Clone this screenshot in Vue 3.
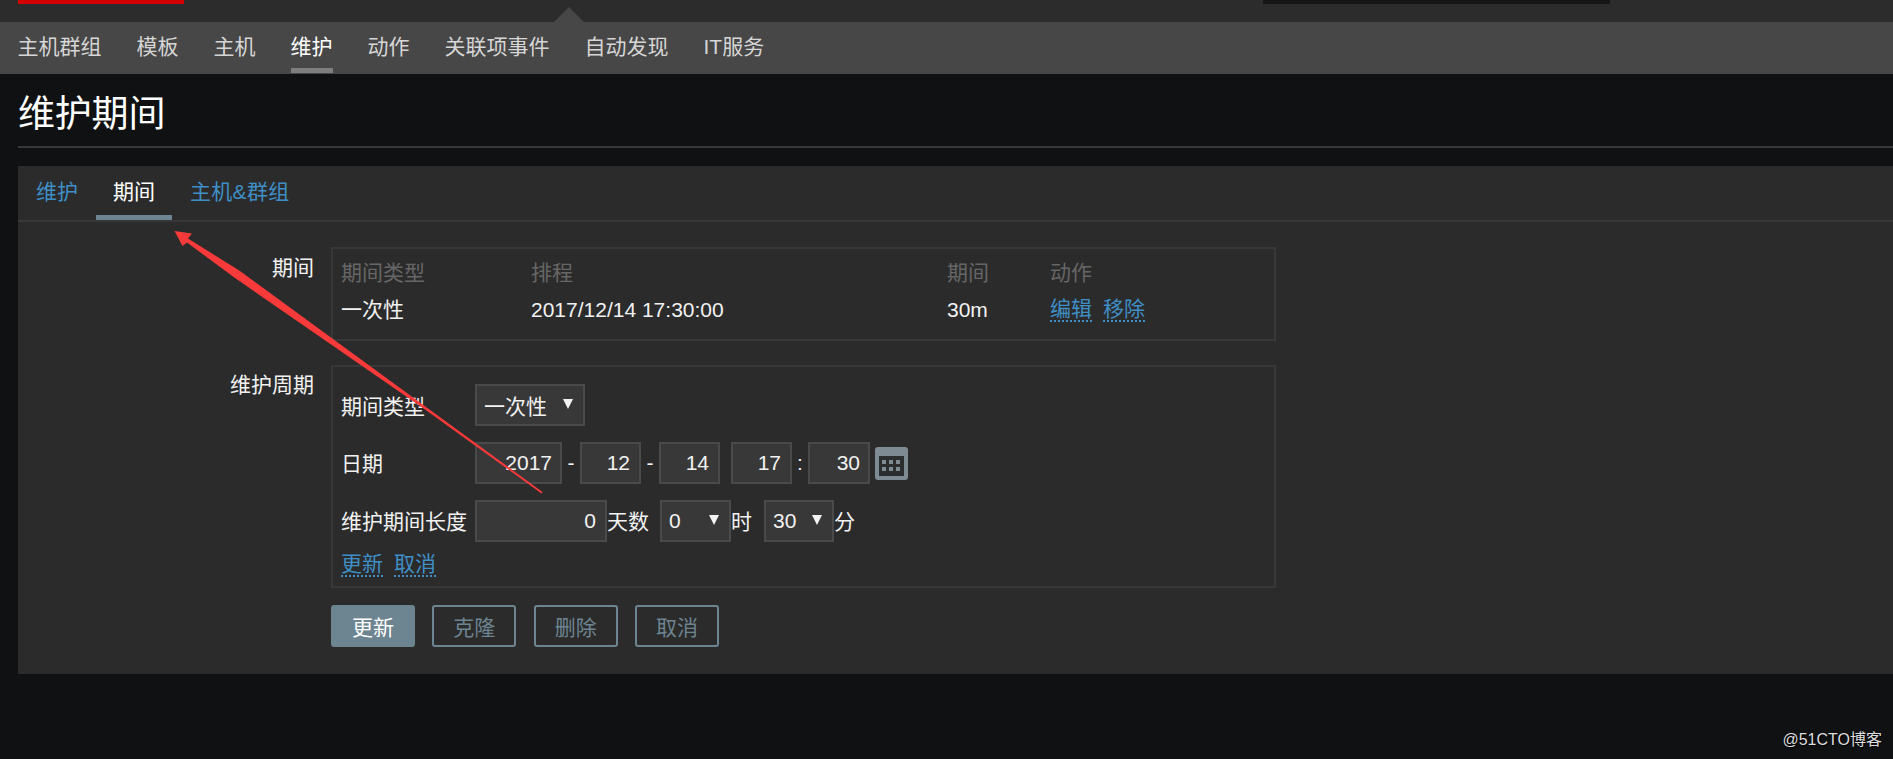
<script setup>
const navItems = ["主机群组", "模板", "主机", "维护", "动作", "关联项事件", "自动发现", "IT服务"];
const tabs = ["维护", "期间", "主机&群组"];
const buttons = ["克隆", "删除", "取消"];
</script>

<template>
  <div class="page">
    <div class="topbar">
      <div class="logo"></div>
      <div class="search"></div>
      <div class="caret"></div>
    </div>

    <nav class="nav">
      <a v-for="item in navItems" :key="item" class="nav-item" :class="{ active: item === '维护' }">{{ item }}</a>
    </nav>

    <h1 class="title">维护期间</h1>

    <section class="panel">
      <div class="tabs">
        <a v-for="tab in tabs" :key="tab" class="tab" :class="{ active: tab === '期间' }">{{ tab }}</a>
      </div>

      <div class="form">
        <div class="form-row">
          <label class="form-label first">期间</label>
          <div class="box period-list">
            <span class="head">期间类型</span>
            <span class="head">排程</span>
            <span class="head">期间</span>
            <span class="head">动作</span>
            <span class="lift">一次性</span>
            <span>2017/12/14 17:30:00</span>
            <span>30m</span>
            <span class="links"><a class="link">编辑</a><a class="link">移除</a></span>
          </div>
        </div>

        <div class="form-row">
          <label class="form-label">维护周期</label>
          <div class="box period-edit">
            <div class="edit-row">
              <span class="edit-label">期间类型</span>
              <div class="field select w-type">一次性<i class="arrow"></i></div>
            </div>
            <div class="edit-row">
              <span class="edit-label lift">日期</span>
              <div class="field w-year">2017</div>
              <span class="sep wide">-</span>
              <div class="field w-part">12</div>
              <span class="sep wide">-</span>
              <div class="field w-part">14</div>
              <div class="field w-part hour">17</div>
              <span class="sep">:</span>
              <div class="field w-min">30</div>
              <svg class="calendar" width="33" height="33" viewBox="0 0 33 33">
                <rect width="33" height="33" rx="3" fill="#7f8b92" />
                <rect x="4" y="9" width="25" height="20" fill="#2b2d2e" />
                <g fill="#7f8b92">
                  <rect x="7" y="13" width="4" height="4" />
                  <rect x="14" y="13" width="4" height="4" />
                  <rect x="21" y="13" width="4" height="4" />
                  <rect x="7" y="20" width="4" height="4" />
                  <rect x="14" y="20" width="4" height="4" />
                  <rect x="21" y="20" width="4" height="4" />
                </g>
              </svg>
            </div>
            <div class="edit-row">
              <span class="edit-label lift">维护期间长度</span>
              <div class="field w-days">0</div>
              <span class="unit lift">天数</span>
              <div class="field select w-hour">0<i class="arrow"></i></div>
              <span class="unit lift">时</span>
              <div class="field select w-minute">30<i class="arrow"></i></div>
              <span class="lift">分</span>
            </div>
            <div class="links edit-links"><a class="link">更新</a><a class="link">取消</a></div>
          </div>
        </div>

        <div class="actions">
          <button class="btn primary">更新</button>
          <button v-for="b in buttons" :key="b" class="btn">{{ b }}</button>
        </div>
      </div>
    </section>

    <!-- red annotation arrow drawn over the screenshot -->
    <svg class="annotation" width="1893" height="759" viewBox="0 0 1893 759">
      <polygon points="174.5,231 192,233.5 188,238.5 240,271 424,405.5 542.5,492 541.5,493.5 424,408.8 235,278 187,242.5 182.5,246" fill="#f93a3a" />
    </svg>

    <div class="watermark">@51CTO博客</div>
  </div>
</template>

<style scoped>
.page {
  position: relative;
  height: 759px;
  overflow: hidden;
  background: #0f1113;
  color: #f2f2f2;
  font-family: "Liberation Sans", "Noto Sans CJK SC", sans-serif;
  font-size: 21px;
}

.topbar {
  position: relative;
  display: flex;
  height: 22px;
  background: #2c2c2c;
}

.logo {
  width: 166px;
  height: 4px;
  margin-left: 18px;
  background: #d40000;
}

.search {
  width: 347px;
  height: 4px;
  margin-left: 1079px;
  background: #161616;
}

.caret {
  position: absolute;
  left: 554px;
  top: 7px;
  width: 0;
  height: 0;
  border-left: 15px solid transparent;
  border-right: 15px solid transparent;
  border-bottom: 15px solid #474747;
}

.nav {
  display: flex;
  gap: 35px;
  height: 52px;
  padding-left: 17.5px;
  background: #474747;
}

.nav-item {
  height: 46px;
  line-height: 50px;
  border-bottom: 5px solid transparent;
  color: #d6d6d6;
}

.nav-item.active {
  color: #fff;
  border-bottom-color: #7e7e7e;
}

.title {
  height: 72px;
  margin: 0 0 0 18px;
  border-bottom: 2px solid #383838;
  color: #fff;
  font-size: 37px;
  font-weight: 400;
  line-height: 82px;
  letter-spacing: -0.2px;
}

.panel {
  margin: 18px 0 0 18px;
  height: 508px;
  box-sizing: border-box;
  background: #2b2b2b;
}

.tabs {
  display: flex;
  height: 56px;
  box-sizing: border-box;
  padding-left: 2px;
  border-bottom: 2px solid #383838;
}

.tab {
  width: 76px;
  height: 54px;
  box-sizing: border-box;
  padding: 0 17px;
  border-bottom: 5px solid transparent;
  color: #3f8fc7;
  line-height: 52px;
  white-space: nowrap;
}

.tab:first-child {
  padding-left: 16px;
}

.tab:last-child {
  width: auto;
  padding-left: 18px;
  letter-spacing: 0.3px;
}

.tab.active {
  color: #fff;
  border-bottom-color: #6d8491;
}

.form {
  display: flex;
  flex-direction: column;
  gap: 24px;
  padding-top: 25px;
}

.form-row {
  display: flex;
  gap: 17px;
}

.form-label {
  width: 296px;
  padding-top: 5px;
  text-align: right;
  line-height: 30px;
}

.form-label.first {
  padding-top: 6px;
}

.box {
  width: 945px;
  box-sizing: border-box;
  border: 2px solid #383838;
}

.period-list {
  display: grid;
  grid-template-columns: 190px 416px 103px 1fr;
  grid-template-rows: 36px 41px;
  align-items: center;
  height: 94px;
  padding: 4px 0 0 8px;
}

.head {
  color: #666;
}

.links {
  display: flex;
  gap: 11px;
}

.link {
  display: inline-block;
  border-bottom: 2px dotted #3f8fc7;
  color: #3f8fc7;
  line-height: 23px;
}

.period-edit {
  display: flex;
  flex-direction: column;
  gap: 16px;
  height: 223px;
  padding: 17px 0 0 8px;
}

.edit-row {
  display: flex;
  align-items: center;
  height: 42px;
}

.edit-label {
  width: 134px;
  flex: none;
  white-space: nowrap;
}

.lift {
  padding-bottom: 3px;
}

.field {
  display: flex;
  align-items: center;
  justify-content: flex-end;
  height: 42px;
  box-sizing: border-box;
  padding: 0 9px;
  border: 2px solid #4a4a4a;
  background: #383838;
}

.select {
  justify-content: space-between;
  padding: 0 3px 0 7px;
}

.arrow {
  width: 0;
  height: 0;
  margin-right: 7px;
  border-left: 5px solid transparent;
  border-right: 5px solid transparent;
  border-top: 10px solid #f2f2f2;
  transform: translateY(-1px);
}

.w-type { width: 110px; }
.w-year { width: 87px; padding-right: 8px; }
.w-part { width: 61px; }
.w-min { width: 62px; padding-right: 8px; }
.w-days { width: 132px; }
.w-hour { width: 71px; }
.w-minute { width: 70px; margin-left: 1px; }

.hour {
  margin-left: 11px;
}

.sep {
  width: 16px;
  text-align: center;
}

.sep.wide {
  width: 18px;
}

.calendar {
  margin-left: 5px;
  flex: none;
}

.unit {
  margin-right: 11px;
}

.edit-links {
  margin-top: -6px;
}

.actions {
  display: flex;
  gap: 17.33px;
  margin: -7px 0 0 313px;
}

.btn {
  width: 84px;
  height: 42px;
  padding: 0;
  border: 2px solid #6d8491;
  border-radius: 3px;
  background: transparent;
  color: #6d8491;
  font: inherit;
}

.btn.primary {
  background: #6d8491;
  color: #fff;
}

.annotation {
  position: absolute;
  left: 0;
  top: 0;
  pointer-events: none;
}

.watermark {
  position: absolute;
  right: 11px;
  top: 731px;
  color: #ddd;
  font-size: 16px;
  line-height: 18px;
  text-shadow: 1px 1px 1px #000;
}
</style>

<style>
html,
body {
  background: #0f1113;
}
</style>
